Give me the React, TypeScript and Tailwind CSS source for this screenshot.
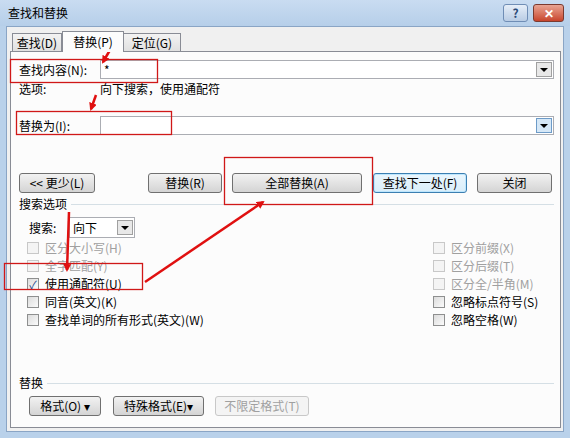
import React from 'react';

const font = { fontFamily: '"Noto Sans CJK SC", "Liberation Sans", sans-serif' };

function Btn({ children, className = '', disabled = false, focused = false }: { children: React.ReactNode; className?: string; disabled?: boolean; focused?: boolean }) {
  return (
    <div
      className={`h-[20px] flex items-center justify-center rounded-[3px] border text-[12px] leading-none ${
        disabled ? 'border-[#c8c8c8] bg-[#f4f4f4] text-[#a0a0a0]' : focused ? 'border-[#3c7fb1] bg-gradient-to-b from-[#eaf6fd] to-[#d9eefa] text-black shadow-[inset_0_0_0_1px_#bde6fd]' : 'border-[#707070] bg-gradient-to-b from-[#f2f2f2] to-[#d4d4d4] text-black'
      } ${className}`}
    >
      {children}
    </div>
  );
}

function Combo({ value, blue = false, className = '' }: { value?: string; blue?: boolean; className?: string }) {
  return (
    <div className={`h-[19px] flex items-center border border-[#abadb3] bg-white ${className}`}>
      <span className="flex-1 pl-[3px] text-[12px] leading-none">{value}</span>
      <div className={`w-[16px] h-[15px] mr-[1px] flex items-center justify-center border ${blue ? 'border-[#6d9bc8] bg-[#d6e8f7]' : 'border-[#a0a0a0] bg-[#e8e8e8]'}`}>
        <div className="w-0 h-0 border-l-[4px] border-r-[4px] border-t-[4px] border-l-transparent border-r-transparent border-t-black" />
      </div>
    </div>
  );
}

function Check({ label, checked = false, disabled = false }: { label: string; checked?: boolean; disabled?: boolean }) {
  return (
    <div className={`h-[18px] flex items-center gap-[6px] text-[12px] ${disabled ? 'text-[#a0a0a0]' : 'text-black'}`}>
      <div className={`w-[12px] h-[12px] border flex items-center justify-center ${disabled ? 'border-[#c8c8c8] bg-[#f4f4f4]' : 'border-[#8e8f8f] bg-gradient-to-br from-[#dcdcdc] to-[#fbfbfb]'}`}>
        {checked && <span className="text-[11px] leading-none text-[#21468b]">✓</span>}
      </div>
      <span>{label}</span>
    </div>
  );
}

export default function App() {
  return (
    <div className="relative w-[570px] h-[438px] overflow-hidden bg-[#b9d1ea]" style={font}>
      {/* title bar */}
      <div className="h-[26px] flex items-center pl-[8px] pr-[6px] bg-gradient-to-b from-[#c9dcf1] to-[#b6cfe9]">
        <span className="text-[12px] text-black flex-1">查找和替换</span>
        <div className="w-[25px] h-[18px] mr-[5px] rounded-[3px] border border-[#6f8db5] bg-gradient-to-b from-[#e6eef8] to-[#b9cce4] flex items-center justify-center text-[12px] text-[#2b4a78] font-bold">?</div>
        <div className="w-[31px] h-[18px] rounded-[3px] border border-[#7b3a2f] bg-gradient-to-b from-[#e8a493] to-[#c7432b] flex items-center justify-center text-[12px] text-white font-bold">✕</div>
      </div>
      {/* body */}
      <div className="mx-[6px] h-[406px] bg-[#f0f0f0] border border-[#8aa5c5] px-[3px] pt-[4px]">
        <div className="flex items-end h-[20px] pl-[2px]">
          <div className="h-[18px] w-[50px] border border-[#898c95] border-b-0 bg-gradient-to-b from-[#f3f3f3] to-[#e0e0e0] text-[12px] flex items-center justify-center">查找(D)</div>
          <div className="h-[21px] w-[62px] -mb-[1px] border border-[#898c95] border-b-0 bg-[#fcfcfc] text-[12px] flex items-center justify-center relative z-10">替换(P)</div>
          <div className="h-[18px] w-[57px] border border-[#898c95] border-b-0 border-l-0 bg-gradient-to-b from-[#f3f3f3] to-[#e0e0e0] text-[12px] flex items-center justify-center">定位(G)</div>
        </div>
        <div className="h-[377px] w-[551px] border border-[#898c95] bg-[#fcfcfc] pl-[8px] pr-[6px] pt-[8px] text-[12px]">
          <div className="flex items-center h-[19px]">
            <span className="w-[81px]">查找内容(N):</span>
            <Combo value="*" className="flex-1" />
          </div>
          <div className="flex items-center h-[18px] mt-[1px]">
            <span className="w-[81px]">选项:</span>
            <span>向下搜索，使用通配符</span>
          </div>
          <div className="flex items-center h-[19px] mt-[18px]">
            <span className="w-[81px]">替换为(I):</span>
            <Combo blue className="flex-1" />
          </div>
          <div className="flex items-center h-[20px] mt-[38px]">
            <Btn className="w-[76px]">&lt;&lt; 更少(L)</Btn>
            <Btn className="w-[74px] ml-[53px]">替换(R)</Btn>
            <Btn className="w-[130px] ml-[10px]">全部替换(A)</Btn>
            <Btn focused className="w-[94px] ml-[11px]">查找下一处(F)</Btn>
            <Btn className="w-[75px] ml-[10px]">关闭</Btn>
          </div>
          <div className="flex items-center h-[16px] mt-[3px]">
            <span>搜索选项</span>
            <div className="flex-1 h-px bg-[#d5dfe5] ml-[4px]" />
          </div>
          <div className="flex items-center h-[21px] mt-[5px] pl-[10px]">
            <span className="w-[40px]">搜索:</span>
            <Combo value="向下" className="w-[66px] h-[21px]" />
          </div>
          <div className="flex mt-[1px] pl-[8px]">
            <div className="flex-1 flex flex-col">
              <Check label="区分大小写(H)" disabled />
              <Check label="全字匹配(Y)" disabled />
              <Check label="使用通配符(U)" checked />
              <Check label="同音(英文)(K)" />
              <Check label="查找单词的所有形式(英文)(W)" />
            </div>
            <div className="w-[121px] flex flex-col">
              <Check label="区分前缀(X)" disabled />
              <Check label="区分后缀(T)" disabled />
              <Check label="区分全/半角(M)" disabled />
              <Check label="忽略标点符号(S)" />
              <Check label="忽略空格(W)" />
            </div>
          </div>
          <div className="flex items-center h-[16px] mt-[46px]">
            <span>替换</span>
            <div className="flex-1 h-px bg-[#d5dfe5] ml-[4px]" />
          </div>
          <div className="flex items-center h-[20px] mt-[5px] pl-[10px]">
            <Btn className="w-[72px]">格式(O) ▾</Btn>
            <Btn className="w-[91px] ml-[12px]">特殊格式(E)▾</Btn>
            <Btn disabled className="w-[94px] ml-[11px]">不限定格式(T)</Btn>
          </div>
        </div>
      </div>
      {/* red annotations */}
      <svg className="absolute inset-0 pointer-events-none" width="570" height="438">
        <defs>
          <marker id="ah" markerWidth="8" markerHeight="8" refX="6" refY="4" orient="auto" markerUnits="userSpaceOnUse">
            <path d="M0,0 L8,4 L0,8 Z" fill="#e01010" />
          </marker>
        </defs>
        <g fill="none" stroke="#d01818" strokeWidth="1.3">
          <rect x="10.5" y="59.5" width="147" height="23" />
          <rect x="16.5" y="111.5" width="155" height="23" />
          <rect x="224.5" y="157.5" width="148" height="47" />
          <rect x="4.5" y="263.5" width="138" height="26" />
        </g>
        <g stroke="#e01010" strokeWidth="2.5" markerEnd="url(#ah)">
          <line x1="110" y1="50" x2="103" y2="62" />
          <line x1="96" y1="95" x2="91" y2="109" />
          <line x1="69" y1="212" x2="67" y2="270" />
          <line x1="145" y1="282" x2="263" y2="202" />
        </g>
      </svg>
    </div>
  );
}
